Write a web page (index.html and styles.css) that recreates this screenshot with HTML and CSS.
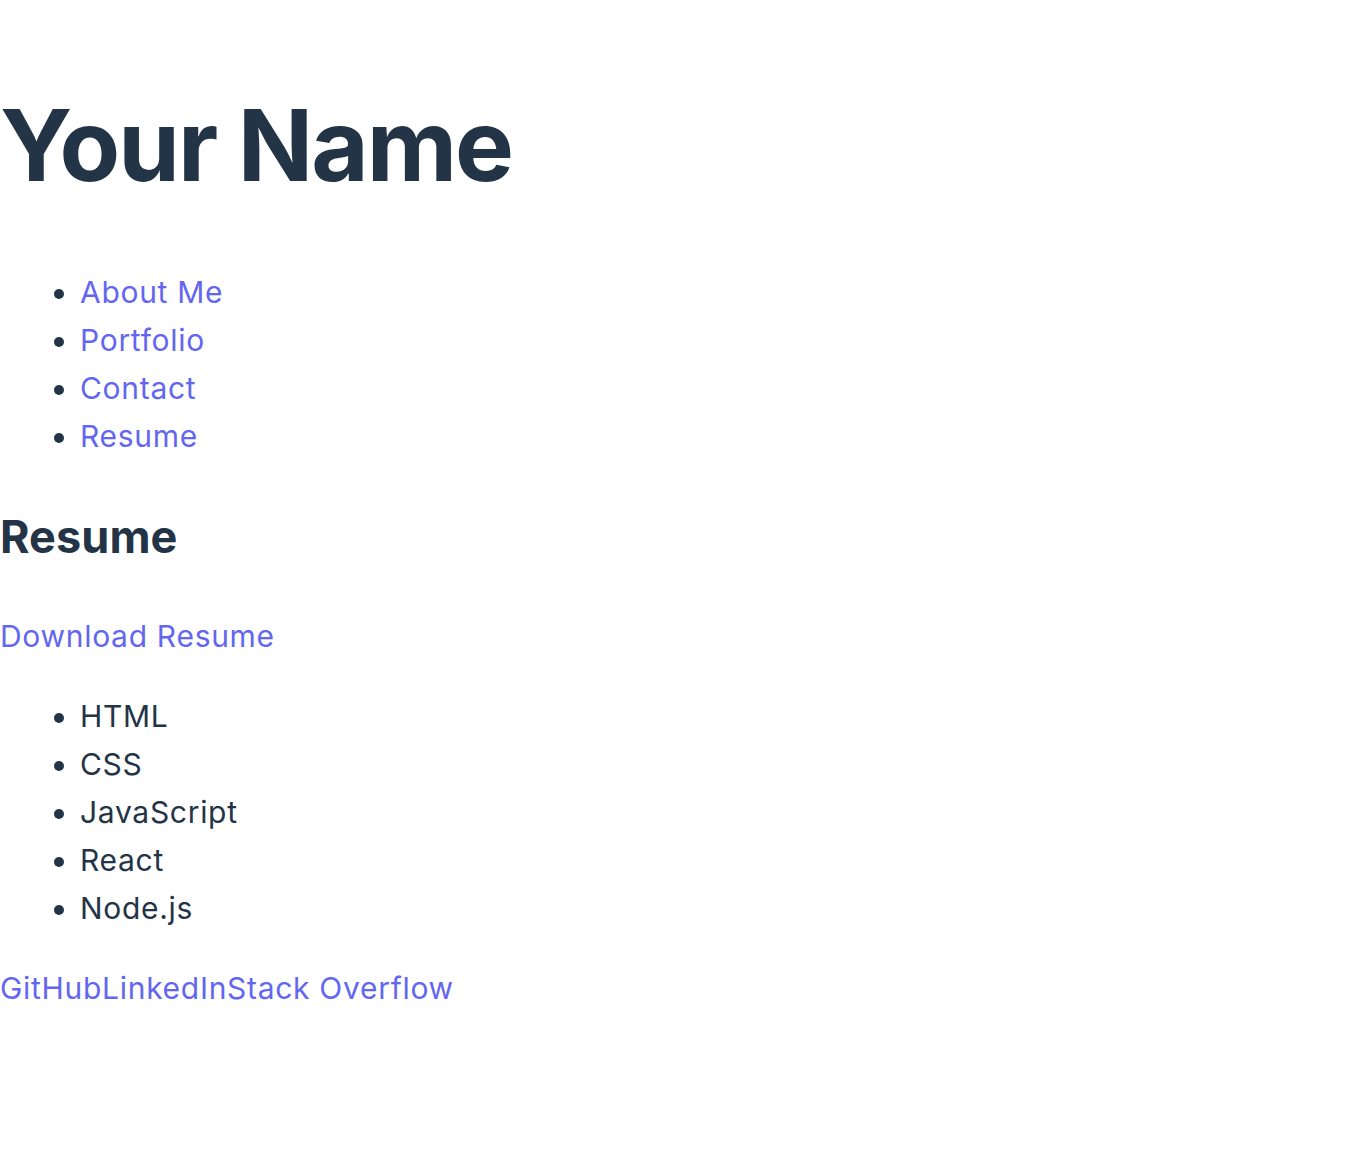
FILE: index.html
```html
<!DOCTYPE html>
<html>
<head>
<meta charset="utf-8">
<link rel="stylesheet" href="styles.css">
</head>
<body>
<header class="hero">
  <h1 class="title">Your Name</h1>
  <nav>
    <ul class="list">
      <li><a class="link" href="#about">About Me</a></li>
      <li><a class="link" href="#portfolio">Portfolio</a></li>
      <li><a class="link" href="#contact">Contact</a></li>
      <li><a class="link" href="#resume">Resume</a></li>
    </ul>
  </nav>
</header>
<section class="resume" id="resume">
  <h2 class="subtitle">Resume</h2>
  <p class="para"><a class="link" href="#">Download Resume</a></p>
  <ul class="list skills">
    <li>HTML</li>
    <li>CSS</li>
    <li>JavaScript</li>
    <li>React</li>
    <li>Node.js</li>
  </ul>
</section>
<footer class="social"><a class="link" href="#">GitHub</a><a class="link" href="#">LinkedIn</a><a class="link" href="#">Stack Overflow</a></footer>
</body>
</html>
```
FILE: styles.css
```css
html, body {
  margin: 0;
  padding: 0;
  background: #ffffff;
}
body {
  font-family: Inter, "Noto Sans", sans-serif;
  font-size: 30px;
  line-height: 48px;
  letter-spacing: 0.7px;
  color: #243447;
}
.title {
  font-size: 99px;
  font-weight: 700;
  line-height: 1.2;
  margin: 86px 0 63px;
  letter-spacing: -0.02em;
}
.list {
  margin: 0;
  padding-left: 80px;
}
.link {
  color: #6366f1;
  text-decoration: none;
}
.subtitle {
  font-size: 45px;
  font-weight: 700;
  line-height: 1.2;
  letter-spacing: 0.1px;
  margin: 50px 0 48px;
}
.para {
  margin: 0 0 32px;
}
.social {
  margin-top: 32px;
}
```
